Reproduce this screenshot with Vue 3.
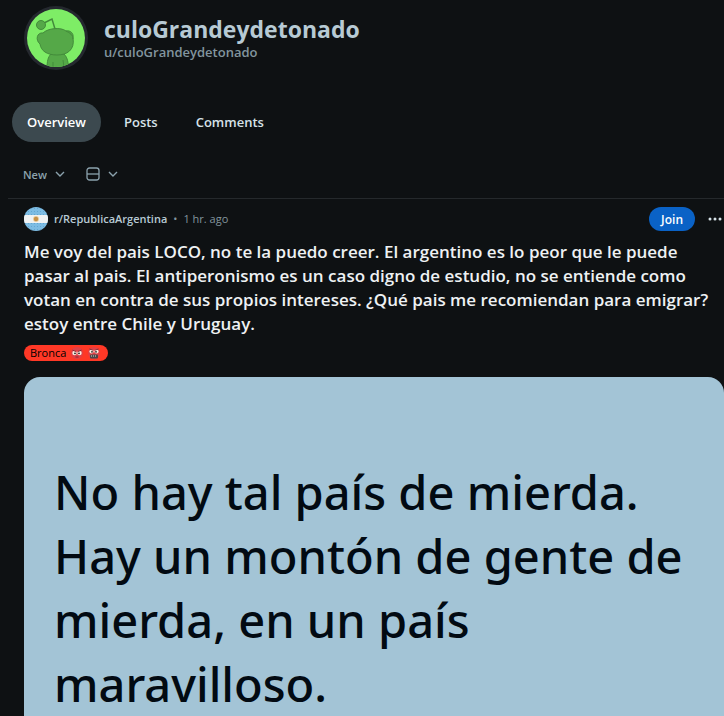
<template>
  <div class="profile-page">
    <header class="profile-header">
      <svg class="profile-avatar" viewBox="0 0 64 64" role="img" aria-label="Avatar">
        <defs>
          <clipPath id="avatar-clip"><circle cx="32" cy="32" r="29" /></clipPath>
        </defs>
        <circle cx="32" cy="32" r="32" fill="#24282e" />
        <circle cx="32" cy="32" r="29" fill="#7eed66" />
        <g clip-path="url(#avatar-clip)" fill="#55a848" stroke="#438b3b" stroke-width="1">
          <path d="M23 63 C23 55 24 51 27 48 H40 C44 52 44 57 45 63 Z" />
          <path d="M29 62 V56 M40 62 L39 54" fill="none" />
          <path d="M31 23 L28 13 L20 17" fill="none" stroke-width="1.5" />
          <circle cx="17" cy="19" r="4.5" />
          <path d="M19 27 C24 22 37 21 42 25 C46 24 50 27 49 32 C51 44 43 49 33 49 C23 49 17 45 16 38 C11 34 13 26 19 27 Z" />
          <path d="M42 25 C46 27 49 29 49 33" fill="none" />
        </g>
      </svg>
      <div>
        <h1 class="profile-name">{{ username }}</h1>
        <p class="profile-handle">u/{{ username }}</p>
      </div>
    </header>

    <nav class="tabs">
      <a
        v-for="tab in tabs"
        :key="tab"
        href="#"
        class="tab"
        :class="{ active: tab === activeTab }"
        @click.prevent="activeTab = tab"
      >{{ tab }}</a>
    </nav>

    <div class="feed-controls">
      <label class="sort-control">
        <select v-model="sort" class="sort-select" aria-label="Sort by">
          <option v-for="option in sortOptions" :key="option">{{ option }}</option>
        </select>
        <svg class="chevron" viewBox="0 0 10 10"><path d="M1 3 L5 7 L9 3" /></svg>
      </label>
      <button class="view-button" type="button" aria-label="Change view">
        <svg class="view-icon" viewBox="0 0 14 14">
          <rect x="1" y="1" width="12" height="12" rx="2.5" />
          <path d="M1 7 H13" />
        </svg>
        <svg class="chevron" viewBox="0 0 10 10"><path d="M1 3 L5 7 L9 3" /></svg>
      </button>
    </div>

    <article class="post">
      <div class="post-meta">
        <svg class="community-icon" viewBox="0 0 24 24" aria-hidden="true">
          <defs>
            <clipPath id="flag-clip"><circle cx="12" cy="12" r="12" /></clipPath>
            <pattern id="flag-dots" width="3" height="3" patternUnits="userSpaceOnUse">
              <circle cx="1.5" cy="1.5" r="0.5" fill="#5a9fcc" />
            </pattern>
          </defs>
          <g clip-path="url(#flag-clip)">
            <rect width="24" height="24" fill="#7dbce3" />
            <rect width="24" height="24" fill="url(#flag-dots)" />
            <rect y="8" width="24" height="8" fill="#f0f2f2" />
            <circle cx="12" cy="12" r="3" fill="#ecd0a0" />
            <circle cx="12" cy="12" r="2.2" fill="#c89248" />
          </g>
        </svg>
        <a href="#" class="community-link">r/RepublicaArgentina</a>
        <span class="dot">•</span>
        <span class="post-time">1 hr. ago</span>
        <button class="join-button" type="button">Join</button>
        <button class="more-button" type="button" aria-label="More options">
          <svg viewBox="0 0 14 4">
            <circle cx="2" cy="2" r="1.5" />
            <circle cx="7" cy="2" r="1.5" />
            <circle cx="12" cy="2" r="1.5" />
          </svg>
        </button>
      </div>

      <h2 class="post-title">
        Me voy del pais LOCO, no te la puedo creer. El argentino es lo peor que le puede
        pasar al pais. El antiperonismo es un caso digno de estudio, no se entiende como
        votan en contra de sus propios intereses. ¿Qué pais me recomiendan para emigrar?
        estoy entre Chile y Uruguay.
      </h2>

      <span class="flair">
        Bronca
        <svg class="flair-face" viewBox="0 0 12 12" aria-hidden="true">
          <circle cx="6" cy="6" r="6" fill="#df4147" />
          <circle cx="3.5" cy="6" r="2.2" fill="#f6eee3" />
          <circle cx="8.5" cy="6" r="2.2" fill="#f6eee3" />
          <circle cx="4" cy="6.3" r="0.9" fill="#291e20" />
          <circle cx="8" cy="6.3" r="0.9" fill="#291e20" />
          <path d="M1.5 3.2 L5 4.5 M10.5 3.2 L7 4.5 M4.5 10 H7.5" stroke="#8b2730" />
        </svg>
        <svg class="flair-face" viewBox="0 0 12 12" aria-hidden="true">
          <circle cx="6" cy="6" r="6" fill="#df4147" />
          <circle cx="3.5" cy="4.5" r="2.1" fill="#f6eee3" />
          <circle cx="8.5" cy="4.5" r="2.1" fill="#f6eee3" />
          <circle cx="4" cy="4.8" r="0.9" fill="#291e20" />
          <circle cx="8" cy="4.8" r="0.9" fill="#291e20" />
          <path d="M1.5 2 L5 3.2 M10.5 2 L7 3.2" stroke="#8b2730" />
          <rect x="2" y="7.5" width="8" height="4" rx="1" fill="#4b4648" />
          <path d="M3 9 H9" stroke="#d8d3cf" stroke-dasharray="1 1" />
        </svg>
      </span>

      <div class="post-media">
        <p class="quote">
          No hay tal país de mierda.<br />
          Hay un montón de gente de<br />
          mierda, en un país<br />
          maravilloso.
        </p>
      </div>
    </article>
  </div>
</template>

<script setup>
import { ref } from "vue";

const username = "culoGrandeydetonado";

const tabs = ["Overview", "Posts", "Comments"];
const activeTab = ref("Overview");

const sortOptions = ["New", "Hot", "Top"];
const sort = ref("New");
</script>

<style>
body {
  margin: 0;
  background-color: #0e1113;
}
</style>

<style scoped>
.profile-page {
  display: flex;
  flex-direction: column;
  box-sizing: border-box;
  min-height: 100vh;
  padding-top: 6px;
  background-color: #0e1113;
  color: #eef1f3;
  font-family: "Open Sans", "Noto Sans", sans-serif;
}

button {
  border: none;
  background: none;
  padding: 0;
  font-family: inherit;
  cursor: pointer;
}

.profile-header {
  display: flex;
  align-items: center;
  gap: 16px;
  padding: 0 24px;
}

.profile-avatar {
  width: 64px;
  height: 64px;
}

.profile-name {
  margin: 0;
  color: #b7cad4;
  font-size: 23px;
  font-weight: 700;
  line-height: 28px;
}

.profile-handle {
  margin: 0;
  color: #82959e;
  font-size: 13px;
  font-weight: 600;
  line-height: 18px;
}

.tabs {
  display: flex;
  gap: 8px;
  margin-top: 32px;
  padding: 0 12px;
}

.tab {
  padding: 0 15px;
  border-radius: 20px;
  color: #d6e2e8;
  font-size: 13px;
  font-weight: 600;
  line-height: 40px;
  text-decoration: none;
}

.tab.active {
  background-color: #3c494f;
  color: #fff;
}

.feed-controls {
  display: flex;
  align-items: center;
  gap: 21px;
  height: 32px;
  margin-top: 16px;
  padding: 0 23px;
}

.sort-control,
.view-button {
  display: flex;
  align-items: center;
  gap: 8px;
}

.sort-select {
  appearance: none;
  field-sizing: content;
  padding: 0;
  border: none;
  background: none;
  color: #8ba2ad;
  font-family: inherit;
  font-size: 11px;
  font-weight: 600;
}

.chevron {
  width: 10px;
  height: 10px;
  fill: none;
  stroke: #8ba2ad;
  stroke-width: 1.4;
}

.view-icon {
  width: 14px;
  height: 14px;
  fill: none;
  stroke: #8ba2ad;
  stroke-width: 1.3;
}

.post {
  display: flex;
  flex: 1;
  flex-direction: column;
  align-items: flex-start;
  margin: 8px 0 0 8px;
  padding: 8px 0 0 16px;
  border-top: 1px solid #25292c;
}

.post-meta {
  display: flex;
  align-items: center;
  align-self: stretch;
  font-size: 11px;
  line-height: 24px;
}

.community-icon {
  width: 24px;
  height: 24px;
  margin-right: 6px;
}

.community-link {
  color: #b7cad4;
  font-weight: 600;
  text-decoration: none;
}

.dot {
  margin: 0 6px;
  color: #82959e;
}

.post-time {
  color: #82959e;
}

.join-button {
  height: 24px;
  margin-left: auto;
  padding: 0 12px;
  border-radius: 12px;
  background-color: #0a62c6;
  color: #fff;
  font-size: 12px;
  font-weight: 600;
}

.more-button {
  display: flex;
  margin: 0 2px 0 13px;
}

.more-button svg {
  width: 14px;
  height: 4px;
  fill: #d6e2e8;
}

.post-title {
  margin: 9px 0 0;
  color: #eef1f3;
  font-size: 17px;
  font-weight: 600;
  line-height: 24px;
}

.flair {
  display: flex;
  align-items: center;
  gap: 5px;
  margin-top: 9px;
  padding: 0 8px 0 6px;
  border-radius: 8px;
  background-color: #ff3826;
  color: #000;
  font-size: 11px;
  line-height: 16px;
}

.flair-face {
  width: 12px;
  height: 12px;
}

.post-media {
  flex: 1;
  align-self: stretch;
  box-sizing: border-box;
  margin-top: 16px;
  padding: 83px 0 0 30px;
  border-radius: 16px 16px 0 0;
  background-color: #a3c4d6;
}

.quote {
  margin: 0;
  color: #020a12;
  font-family: "Noto Sans", "Open Sans", sans-serif;
  font-size: 47px;
  font-weight: 500;
  line-height: 64px;
  white-space: nowrap;
}
</style>
